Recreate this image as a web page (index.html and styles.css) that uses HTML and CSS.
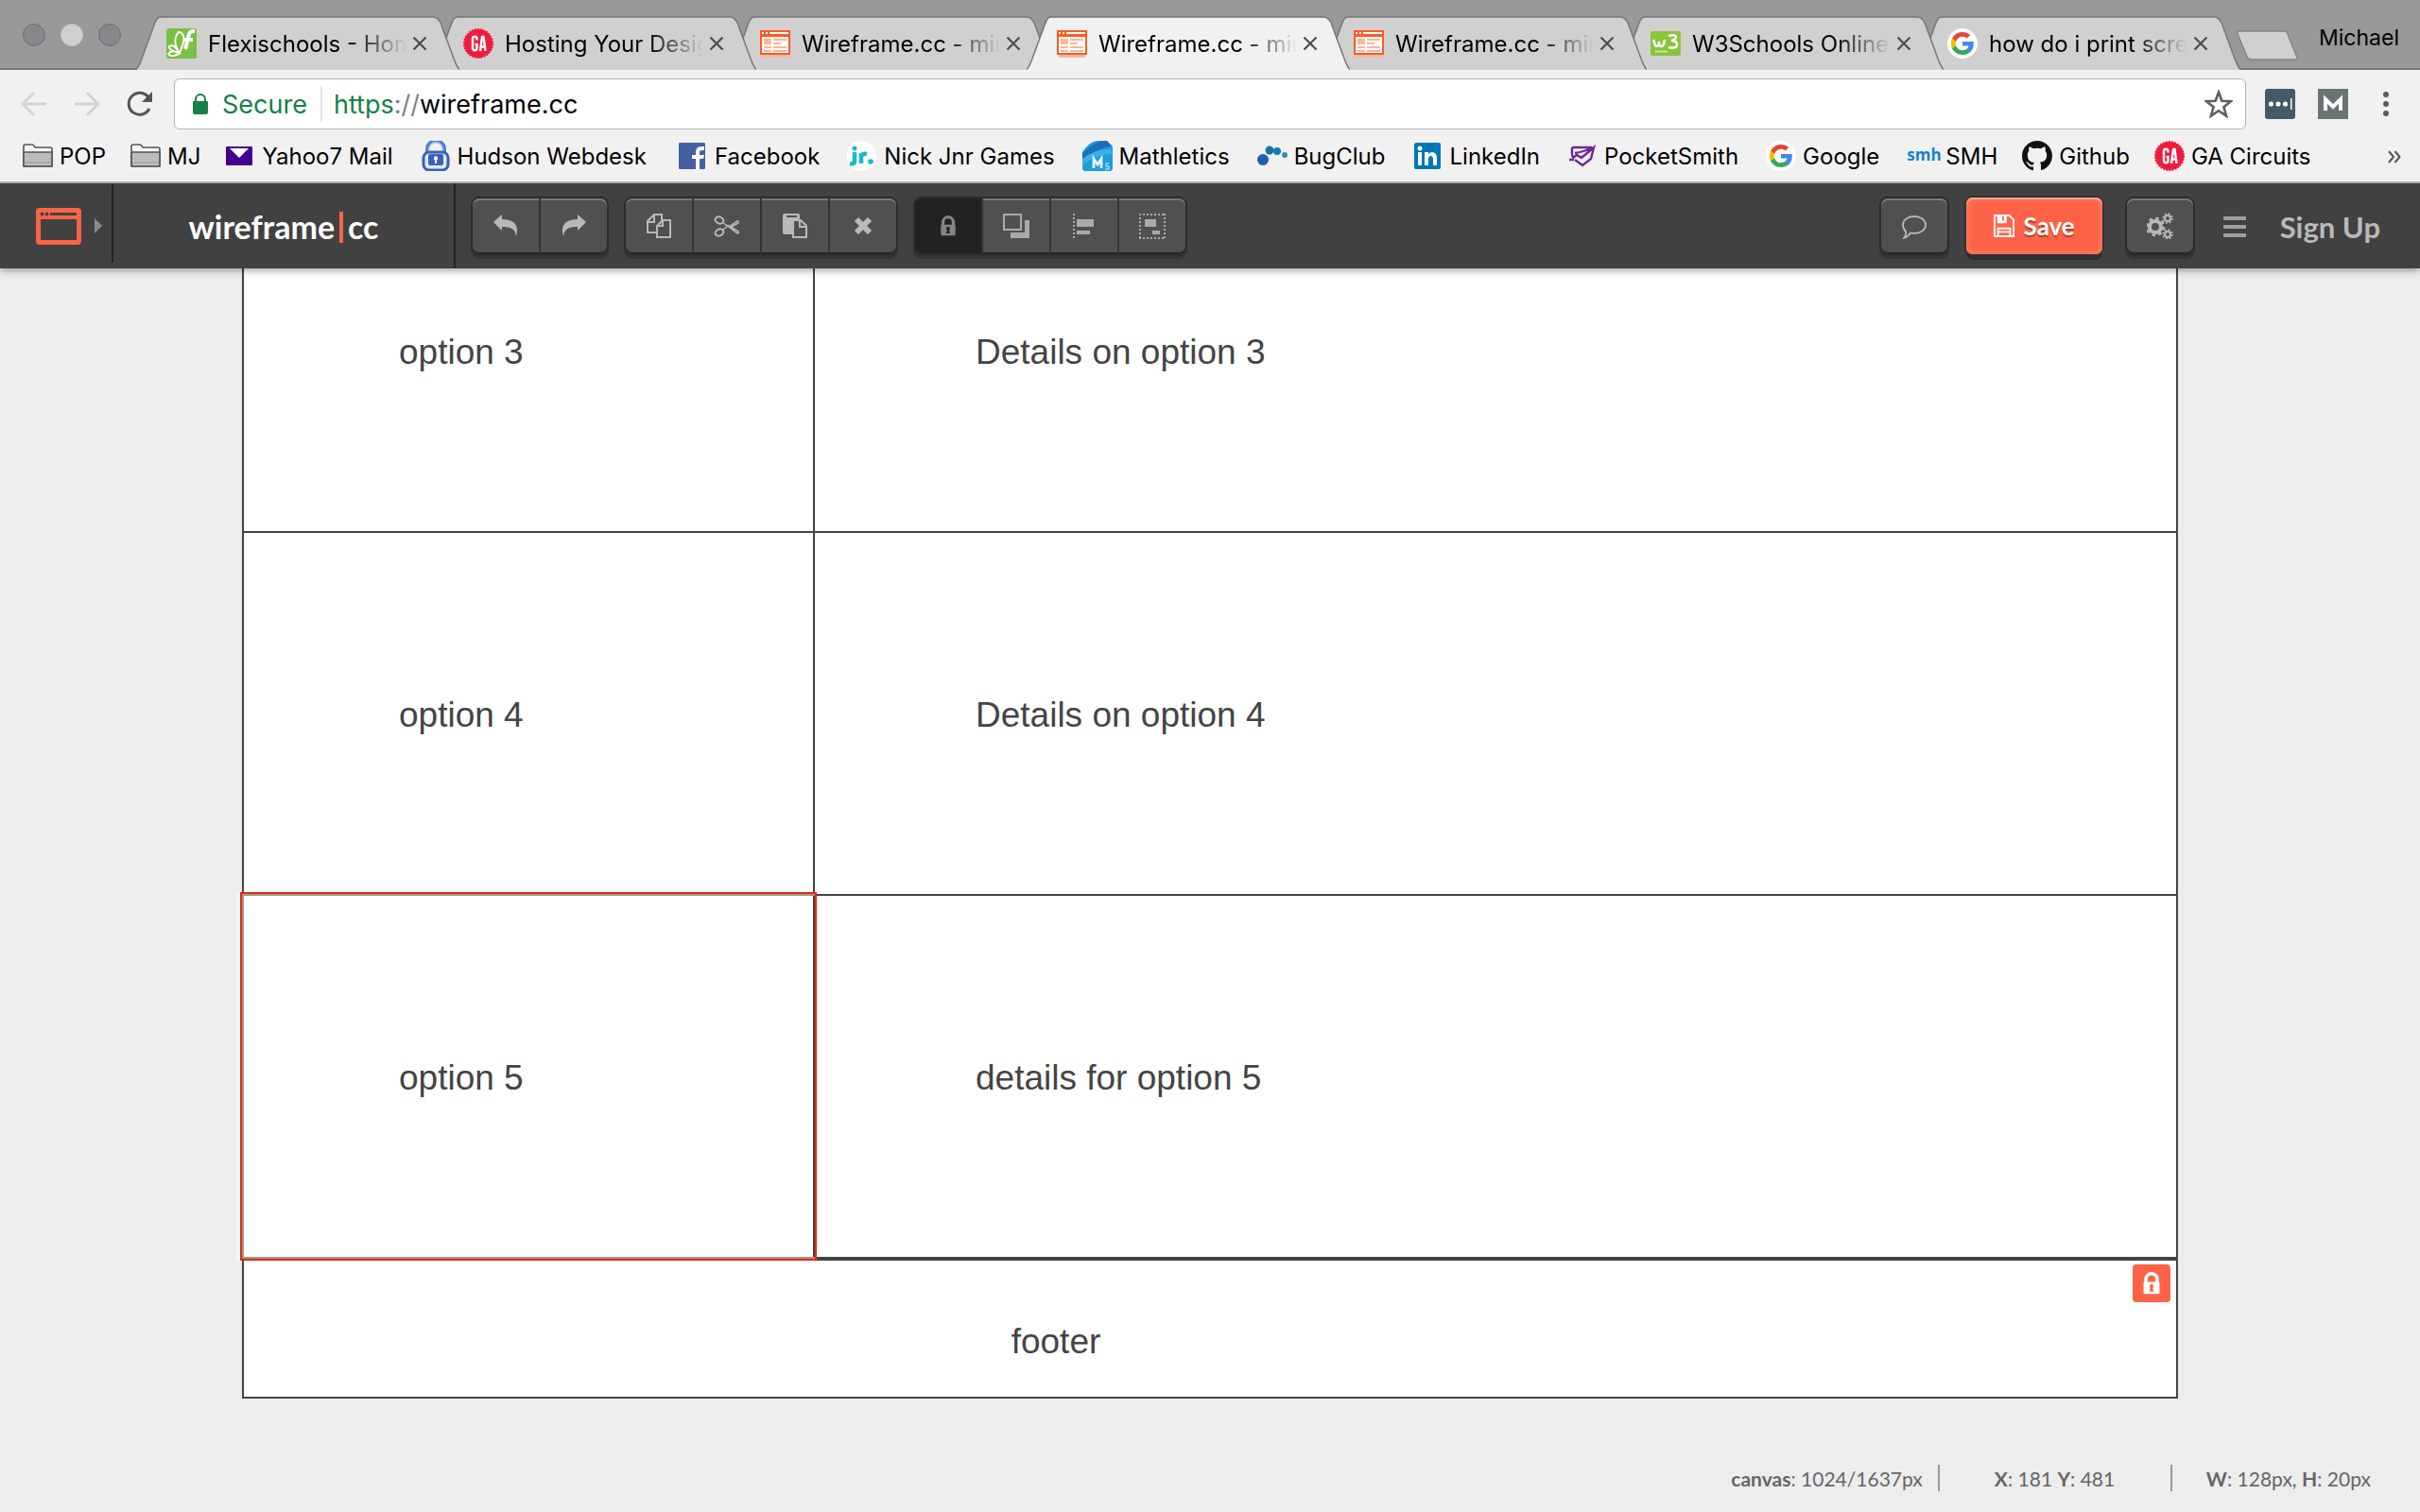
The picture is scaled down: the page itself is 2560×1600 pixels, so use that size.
FILE: index.html
```
<!DOCTYPE html>
<html lang="en">
<head>
<meta charset="utf-8">
<title>Wireframe.cc</title>
<link rel="stylesheet" href="styles.css">
</head>
<body>
<svg width="0" height="0" class="defs" aria-hidden="true">
  <defs>
    <symbol id="tab-shape" viewBox="0 0 342 57">
      <path d="M0 57C3 54 4 50 6 45L20 7C22 2 23 1 27 1H314C318 1 320 3 322 7L336 45C338 50 339 54 342 57Z" class="tab-fill"/>
      <path d="M0 56.500C3 54 4 50 6 45L20 7C22 2 23 1 27 1H314C318 1 320 3 322 7L336 45C338 50 339 54 342 56.500" fill="none" stroke="#777" stroke-width="1.500"/>
    </symbol>
    <symbol id="i-close" viewBox="0 0 16 16"><path d="M1.500 1.500l13 13M14.500 1.500l-13 13" stroke="#4d4d4d" stroke-width="2.200" fill="none"/></symbol>
    <symbol id="i-wire" viewBox="0 0 32 32">
      <path d="M2 28h28v3H2z" fill="#f4b9a4"/><path d="M0 2h32v26H0z" fill="#ff5a1f"/>
      <path d="M2 4h2v2H2zM6 4h2v2H6zM10 4h20v2H10zM2 9h28v17H2z" fill="#fff"/>
      <path d="M4 11h8v6H4zM14 11h14v2H14zM14 15h8v2h-8zM4 19h8v2H4zM14 19h14v2H14zM4 23h8v2H4zM14 23h14v2H14z" fill="#ffb596"/>
    </symbol>
    <symbol id="i-ga" viewBox="0 0 32 32">
      <circle cx="16" cy="16" r="15" fill="#ee1c3c" stroke="#ee1c3c" stroke-width="2" stroke-dasharray="2 1.140"/>
      <path d="M14.500 12.500V11c0-3-4.500-3-4.500 0v10c0 3 4.500 3 4.500 0v-4h-2M18 24l2-15h1.500l2 15M18.700 19.500h4" fill="none" stroke="#fff" stroke-width="2.400"/>
    </symbol>
    <symbol id="i-google" viewBox="0 0 32 32">
      <circle cx="16" cy="16" r="16" fill="#fff"/>
      <path d="M27.800 16.300c0-.9-.1-1.600-.2-2.300H16v4.600h6.600c-.3 1.500-1.100 2.700-2.400 3.600v3h3.900c2.300-2.100 3.700-5.200 3.700-8.900z" fill="#4285f4"/>
      <path d="M16 28c3.300 0 6-1.100 8.100-2.900l-3.900-3c-1.100.7-2.500 1.200-4.200 1.200-3.200 0-5.900-2.200-6.900-5.100H5.100v3.100C7.100 25.300 11.200 28 16 28z" fill="#34a853"/>
      <path d="M9.100 18.200c-.5-1.500-.5-3 0-4.500v-3.100H5.100c-1.600 3.300-1.600 7.300 0 10.700z" fill="#fbbc05"/>
      <path d="M16 8.700c1.800 0 3.400.6 4.700 1.800l3.500-3.500C22 5 19.300 4 16 4 11.200 4 7.100 6.700 5.100 10.600l4 3.100c1-2.900 3.700-5 6.900-5z" fill="#ea4335"/>
    </symbol>
    <symbol id="i-folder" viewBox="0 0 32 32">
      <path d="M1 27V6q0-2 2-2h7q1.500 0 2 1.500L13 7h16q2 0 2 2v18z" fill="#f4f4f4" stroke="#555" stroke-width="1.600"/>
      <path d="M1 12h30v13q0 2-2 2H3q-2 0-2-2z" fill="#bcbcbc" stroke="#555" stroke-width="1.600"/><path d="M2 23h28" stroke="#999"/>
    </symbol>
    <symbol id="i-lock" viewBox="0 0 28 34">
      <path d="M2 16q0-1 1-1V11a11 11 0 0 1 22 0v4q1 0 1 1v15q0 2-2 2H4q-2 0-2-2zM8 15h12v-4a6 6 0 0 0-12 0z" fill-rule="evenodd" fill="currentColor"/>
      <path d="M14 18.500a3 3 0 0 0-2 5.200V26l-1.500 3.500h7L16 26v-2.300a3 3 0 0 0-2-5.200z" class="keyhole"/>
    </symbol>
  </defs>
</svg>

<header class="browser">
  <div class="tabstrip">
    <div class="lights"><i></i><i class="lit"></i><i></i></div>
    <ul class="tabs">
      <li class="tab"><svg class="shape"><use href="#tab-shape"/></svg>
        <svg class="fav" viewBox="0 0 32 32"><rect width="32" height="32" rx="2" fill="#7ac043"/><g fill="none" stroke="#fff" stroke-width="1.800"><path d="M14 26C8 18 8 9 13 4c5 0 6 6 5 11-1 4-3 8-4 11zM14 26C10 19 6 17 3 19c-1 3 5 6 11 7zM14 26C9 24 4 24 2 27c2 3 8 3 12-1"/></g><path d="M20 22c2-5 2-11 4-16 1-3 3-3 6-3M19 12h9" stroke="#fff" stroke-width="4" fill="none"/></svg>
        <span class="title">Flexischools - Home</span><button class="close" aria-label="Close tab"><svg><use href="#i-close"/></svg></button></li>
      <li class="tab"><svg class="shape"><use href="#tab-shape"/></svg><svg class="fav"><use href="#i-ga"/></svg><span class="title">Hosting Your Design</span><button class="close" aria-label="Close tab"><svg><use href="#i-close"/></svg></button></li>
      <li class="tab"><svg class="shape"><use href="#tab-shape"/></svg><svg class="fav"><use href="#i-wire"/></svg><span class="title">Wireframe.cc - min</span><button class="close" aria-label="Close tab"><svg><use href="#i-close"/></svg></button></li>
      <li class="tab active"><svg class="shape"><use href="#tab-shape"/></svg><svg class="fav"><use href="#i-wire"/></svg><span class="title">Wireframe.cc - min</span><button class="close" aria-label="Close tab"><svg><use href="#i-close"/></svg></button></li>
      <li class="tab"><svg class="shape"><use href="#tab-shape"/></svg><svg class="fav"><use href="#i-wire"/></svg><span class="title">Wireframe.cc - min</span><button class="close" aria-label="Close tab"><svg><use href="#i-close"/></svg></button></li>
      <li class="tab"><svg class="shape"><use href="#tab-shape"/></svg>
        <svg class="fav" viewBox="0 0 32 32"><rect y="3" width="32" height="26" rx="2" fill="#8ac53e"/><path d="M3 12l2 6q2 2 4-1v-3 3q2 4 5 0l1-5M19 8q7-2 8 1 0 3-5 4 6 0 6 4 0 5-9 3" fill="none" stroke="#fff" stroke-width="2.500"/><path d="M5 24.500h13" stroke="#e3f1d0" stroke-width="2" stroke-dasharray="1.500 .7"/></svg>
        <span class="title">W3Schools Online</span><button class="close" aria-label="Close tab"><svg><use href="#i-close"/></svg></button></li>
      <li class="tab"><svg class="shape"><use href="#tab-shape"/></svg><svg class="fav"><use href="#i-google"/></svg><span class="title">how do i print scre</span><button class="close" aria-label="Close tab"><svg><use href="#i-close"/></svg></button></li>
    </ul>
    <button class="newtab" aria-label="New tab"><svg viewBox="0 0 66 34"><path d="M3 1H50q3 0 4 3l10 25q1 2-2 2H16q-4 0-5-3L1 4Q0 1 3 1z" fill="#d0d0d0" stroke="#858585" stroke-width="1.500"/></svg></button>
    <button class="profile">Michael</button>
  </div>

  <div class="toolbar">
    <button aria-label="Back"><svg viewBox="0 0 28 28" fill="none" stroke="#d2d2d2" stroke-width="2.800"><path d="M27 14H3M14 2L2 14l12 12"/></svg></button>
    <button aria-label="Forward"><svg viewBox="0 0 28 28" fill="none" stroke="#d2d2d2" stroke-width="2.800"><path d="M1 14h24M14 2l12 12-12 12"/></svg></button>
    <button aria-label="Reload"><svg viewBox="0 0 28 28"><path d="M24 19A11.500 11.500 0 1 1 23 7" fill="none" stroke="#555" stroke-width="3"/><path d="M27 1v11H16z" fill="#555"/></svg></button>
    <div class="omnibox">
      <svg class="secure-icon" viewBox="0 0 16 22"><path d="M2 8V6a6 6 0 0 1 12 0v2h1q1 0 1 1v11q0 2-2 2H2q-2 0-2-2V9q0-1 1-1zm2 0h8V6a4 4 0 0 0-8 0z" fill="#188046" fill-rule="evenodd"/></svg>
      <span class="secure">Secure</span>
      <div class="url" role="textbox" contenteditable="true" aria-label="Address"><span class="scheme">https</span><span class="sep">://</span>wireframe.cc</div>
      <button aria-label="Bookmark this page"><svg viewBox="0 0 30 30"><path d="M15 2.500l3.400 9.300 9.600.4-7.600 6 2.700 9.500-8.100-5.500-8.100 5.500 2.700-9.500-7.600-6 9.600-.4z" fill="none" stroke="#5f5f5f" stroke-width="2.600"/></svg></button>
    </div>
    <div class="extensions">
      <button aria-label="Password manager"><svg viewBox="0 0 32 32"><rect width="32" height="32" rx="3" fill="#455a64"/><g fill="#fff"><circle cx="6.500" cy="16" r="2.600"/><circle cx="14" cy="16" r="2.600"/><circle cx="21.500" cy="16" r="2.600"/><path d="M27 10h1.500v12H27z"/></g></svg></button>
      <button aria-label="Mail extension"><svg viewBox="0 0 32 32"><path fill="#6a7373" d="M0 0h32v32H0z"/><path d="M8 23V11l8 8 8-8v12" fill="none" stroke="#fff" stroke-width="4"/></svg></button>
      <button aria-label="Menu"><svg viewBox="0 0 32 32" fill="#5a5a5a"><circle cx="16" cy="6" r="3"/><circle cx="16" cy="16" r="3"/><circle cx="16" cy="26" r="3"/></svg></button>
    </div>
  </div>

  <nav class="bookmarks">
    <a class="tight" href="#"><svg><use href="#i-folder"/></svg>POP</a>
    <a class="tight" href="#"><svg><use href="#i-folder"/></svg>MJ</a>
    <a href="#"><svg viewBox="0 0 32 32"><rect x="1" y="6" width="28" height="20" rx="1" fill="#410093"/><path d="M5 8h20L15 18z" fill="#fff"/></svg>Yahoo7 Mail</a>
    <a class="loose" href="#"><svg viewBox="0 0 32 32"><path d="M7 14V9a9 9 0 0 1 18 0v5" fill="none" stroke="#4a7fc8" stroke-width="4"/><path d="M8.500 14V9a7.500 7.500 0 0 1 15 0v5" fill="none" stroke="#9dbfea" stroke-width="1.500"/><rect x="3" y="12" width="26" height="19" rx="6" fill="#dfe8f8" stroke="#3d5fae" stroke-width="3"/><rect x="8" y="14" width="16" height="12" rx="2" fill="#3c62b8"/><path d="M16 16a2.500 2.500 0 0 0-1 4.500V24h2v-3.500A2.500 2.500 0 0 0 16 16z" fill="#fff"/></svg>Hudson Webdesk</a>
    <a href="#"><svg viewBox="0 0 32 32"><rect x="1" y="2" width="28" height="28" rx="1" fill="#4460a0"/><path d="M19 30V19h-4v-4h4v-3q0-6 6-6h3v4h-2q-3 0-3 2v3h5l-1 4h-4v11z" fill="#fff"/></svg>Facebook</a>
    <a href="#"><svg viewBox="0 0 32 32"><circle cx="15" cy="16" r="16" fill="#fff"/><path d="M8 12v10q0 3-5 2M15 24V13M15 16q2-3 6-2" fill="none" stroke="#1bb8cf" stroke-width="4.500"/><circle cx="8" cy="8" r="2.500" fill="#1bb8cf"/><circle cx="25" cy="22" r="2.800" fill="#1bb8cf"/></svg>Nick Jnr Games</a>
    <a href="#"><svg viewBox="0 0 32 32"><path d="M0 12Q8 0 16 0h10l6 6v24l-2 2H2l-2-2z" fill="#1f9ddb"/><path d="M6 8q10-9 20-8l5 6Q18 7 0 20v-7z" fill="#1c6fb5"/><path d="M0 19Q14 8 31 9v5Q14 14 0 26z" fill="#3bb0e4"/><path d="M12 29V19l4 6 4-6v10" fill="none" stroke="#e6f6fd" stroke-width="2.800"/><path d="M28 24h-3v3h3v3h-4" fill="none" stroke="#9bd7f3" stroke-width="1.500"/></svg>Mathletics</a>
    <a href="#"><svg viewBox="0 0 32 32"><circle cx="6" cy="20" r="6" fill="#1f5fa8"/><circle cx="13" cy="10" r="4.500" fill="#1273a8"/><circle cx="21" cy="11" r="4" fill="#0f80ac"/><circle cx="29" cy="15" r="3" fill="#2a96b4"/></svg>BugClub</a>
    <a href="#"><svg viewBox="0 0 32 32"><rect x="1" y="2" width="28" height="28" rx="2" fill="#0077b5"/><circle cx="7" cy="8" r="2.500" fill="#fff"/><path d="M5 12h4v14H5zM12 12h4v2c3-4 9-2 9 4v8h-4v-7c0-4-5-4-5 0v7h-4z" fill="#fff"/></svg>LinkedIn</a>
    <a href="#"><svg viewBox="0 0 32 32"><path d="M5 7h21M5 7v7q0 3 2 5M8 13q8-1 20-6M6 18l4-3 5 3L28 7 25 19l-9 7-8-6M2 20h5" fill="none" stroke="#6b2c91" stroke-width="2.400"/></svg>PocketSmith</a>
    <a href="#"><svg><use href="#i-google"/></svg>Google</a>
    <a class="tight" href="#"><span class="smh">smh</span>SMH</a>
    <a class="tight" href="#"><svg viewBox="0 0 16 16"><path fill="#111" d="M8 0C3.600 0 0 3.600 0 8c0 3.500 2.300 6.500 5.500 7.600.4.100.5-.2.500-.4v-1.500c-2 .4-2.500-.5-2.700-.9-.1-.3-.5-1-.8-1.200-.3-.1-.7-.5 0-.5.600 0 1.100.6 1.200.8.700 1.200 1.900.9 2.300.7.100-.5.300-.9.500-1.100-1.800-.2-3.600-.9-3.600-4 0-.9.300-1.600.8-2.100-.1-.2-.4-1 .1-2.100 0 0 .7-.2 2.200.8a7.400 7.400 0 0 1 4 0c1.500-1 2.200-.8 2.200-.8.400 1.100.2 1.900.1 2.100.5.600.8 1.300.8 2.100 0 3.100-1.900 3.700-3.700 3.900.3.300.6.800.6 1.500v2.200c0 .2.100.5.500.4A8 8 0 0 0 16 8c0-4.400-3.600-8-8-8z"/></svg>Github</a>
    <a href="#"><svg><use href="#i-ga"/></svg>GA Circuits</a>
    <button class="more" aria-label="More bookmarks"><svg viewBox="0 0 14 14"><path d="M1 1l5 6-5 6M7.500 1l5 6-5 6" fill="none" stroke="#555" stroke-width="2"/></svg></button>
  </nav>
</header>

<div class="appbar">
  <button class="device" aria-label="Choose device">
    <svg class="window" viewBox="0 0 48 39"><path d="M4 0h40q4 0 4 4v31q0 4-4 4H4q-4 0-4-4V4q0-4 4-4zM5 12v22h38V12z" fill="#ff6347" fill-rule="evenodd"/><path d="M15 5h28v3H15z" fill="#414141"/><circle cx="6.500" cy="6.500" r="1.900" fill="#414141"/><circle cx="11.500" cy="6.500" r="1.900" fill="#414141"/></svg>
    <svg class="caret" viewBox="0 0 8 16"><path d="M0 0l8 8-8 8z" fill="#8a8a8a"/></svg>
  </button>
  <a class="brand" href="#">wireframe<i></i>cc</a>
  <div class="group">
    <button aria-label="Undo"><svg viewBox="0 0 28 28"><path d="M1 10L10 2v5c11 0 19 5 15 18-1-8-6-10-15-10v4z" fill="currentColor"/></svg></button>
    <button aria-label="Redo"><svg viewBox="0 0 28 28"><path d="M27 10L18 2v5C7 7-1 12 3 25c1-8 6-10 15-10v4z" fill="currentColor"/></svg></button>
  </div>
  <div class="group">
    <button aria-label="Copy"><svg viewBox="0 0 28 28" fill="none" stroke="currentColor" stroke-width="2"><path d="M11 21H2V9l7-7h8v6M2 10h7V2M12 26V14l6-6h8v18zM12 14h6V8"/></svg></button>
    <button aria-label="Cut"><svg viewBox="0 0 28 28" fill="none" stroke="currentColor" stroke-width="2"><ellipse cx="6" cy="8" rx="4.500" ry="3.500" transform="rotate(25 6 8)"/><ellipse cx="6" cy="21" rx="4.500" ry="3.500" transform="rotate(-25 6 21)"/><path d="M10 11l6 4 9-6q2 0 1 2l-9 5M10 18l6-5M16 15l9 7q2 0 1-2l-8-5" stroke-width="1.500"/></svg></button>
    <button aria-label="Paste"><svg viewBox="0 0 28 28"><path d="M1 3q0-2 2-2h14q2 0 2 2v4q-8 4-8 10v6H3q-2 0-2-2zM5 3v2h11V3z" fill="currentColor" fill-rule="evenodd"/><path d="M12 8h8l6 6v12H12zM19 8v7h7" fill="#505050" stroke="currentColor" stroke-width="2"/></svg></button>
    <button aria-label="Delete"><svg viewBox="0 0 28 28"><path d="M7 7l14 14M21 7L7 21" stroke="currentColor" stroke-width="6"/></svg></button>
  </div>
  <div class="group">
    <button class="on" aria-label="Lock"><svg><use href="#i-lock"/></svg></button>
    <button aria-label="Bring forward"><svg viewBox="0 0 28 28"><path d="M23 8h5v19H8v-6h15z" fill="#aaa"/><path d="M1 2h18v16H1z" fill="#505050" stroke="#aaa" stroke-width="2"/></svg></button>
    <button aria-label="Align"><svg viewBox="0 0 28 28" fill="#aaa"><path d="M6 7h18v8H6zM6 19h14v4H6z"/><path d="M3 1v28" stroke="#aaa" stroke-width="2" stroke-dasharray="2 2"/></svg></button>
    <button aria-label="Group"><svg viewBox="0 0 28 28" fill="#aaa"><path d="M6 7h12v8H6zM14 19h8v4h-8z"/><path d="M0 2h28M0 27h28M1 1v27M27 1v27" stroke="#aaa" stroke-width="2" stroke-dasharray="2 2"/></svg></button>
  </div>
  <div class="right">
    <div class="group"><button aria-label="Comments"><svg viewBox="0 0 28 28"><path d="M14 4c7 0 12 4 12 9s-5 9-12 9q-2 0-4-.5Q7 26 3 27q3-4 2-7-3-3-3-7c0-5 5-9 12-9z" fill="none" stroke="currentColor" stroke-width="1.800"/></svg></button></div>
    <button class="save"><svg viewBox="0 0 24 28" fill="none" stroke="#fff" stroke-width="2"><path d="M1 2h17l5 5v19H1z"/><path d="M5 26v-9h14v9M5 21h14"/><path d="M5 2h9v8H5z" fill="#fff"/><path d="M11 3v5" stroke="#ff6347"/></svg>Save</button>
    <div class="group"><button aria-label="Settings"><svg viewBox="0 0 28 28" fill="none" stroke="currentColor"><circle cx="9" cy="15" r="6" stroke-width="4"/><circle cx="9" cy="15" r="9" stroke-width="2.500" stroke-dasharray="3.500 3.570"/><circle cx="22" cy="6" r="3" stroke-width="2"/><circle cx="22" cy="6" r="5" stroke-width="1.500" stroke-dasharray="2 1.920"/><circle cx="22" cy="23" r="3" stroke-width="2"/><circle cx="22" cy="23" r="5" stroke-width="1.500" stroke-dasharray="2 1.920"/></svg></button></div>
    <button class="burger" aria-label="Menu"><svg viewBox="0 0 24 24"><path d="M0 2h24v4H0zM0 11h24v4H0zM0 20h24v4H0z" fill="#a0a0a0"/></svg></button>
    <a class="signup" href="#">Sign Up</a>
  </div>
</div>

<main class="stage">
  <div class="sheet">
    <div class="row"><div class="cell">option 3</div><div class="cell wide">Details on option 3</div></div>
    <div class="row"><div class="cell">option 4</div><div class="cell wide">Details on option 4</div></div>
    <div class="row"><div class="cell selected">option 5</div><div class="cell wide">details for option 5</div></div>
    <div class="foot">footer<span class="badge"><svg><use href="#i-lock"/></svg></span></div>
  </div>
  <div class="status">
    <span class="canvas-size"><b>canvas</b>: 1024/1637px</span>
    <span class="pointer"><b>X</b>: 181 <b>Y</b>: 481</span>
    <span class="size"><b>W</b>: 128px, <b>H</b>: 20px</span>
  </div>
</main>
</body>
</html>
```
FILE: styles.css
```
* { box-sizing: border-box; }
html, body { height: 100%; }
body {
  margin: 0;
  display: flex;
  flex-direction: column;
  overflow: hidden;
  background: #ededed;
  font-family: Inter, "Liberation Sans", sans-serif;
  font-size: 24px;
  color: #000;
}
button { padding: 0; border: 0; background: none; font: inherit; color: inherit; }
a { color: inherit; text-decoration: none; }
svg { display: block; flex: none; }
.defs { position: absolute; }

/* Browser window */
.browser { position: relative; z-index: 6; flex: none; background: #f1f1f1; border-bottom: 2px solid #b0b0b0; }
.tabstrip {
  display: flex;
  align-items: flex-end;
  height: 74px;
  padding-right: 22px;
  background: #999;
  box-shadow: inset 0 -2px #777;
}
.lights { display: flex; gap: 16px; align-self: center; width: 144px; padding-left: 24px; }
.lights i { width: 24px; height: 24px; border-radius: 50%; background: #88868b; border: 1px solid #706e74; }
.lights .lit { background: #d0d0d0; border-color: #c4c4c4; }
.tabs { display: flex; margin: 0; padding: 0; list-style: none; }
.tab {
  position: relative;
  display: flex;
  align-items: center;
  width: 342px;
  height: 57px;
  padding-left: 32px;
}
.tab + .tab { margin-left: -28px; }
.tab:nth-child(1) { z-index: 3; }
.tab:nth-child(2) { z-index: 2; }
.tab:nth-child(3) { z-index: 1; }
.tab:nth-child(5) { z-index: 3; }
.tab:nth-child(6) { z-index: 2; }
.tab:nth-child(7) { z-index: 1; }
.tab.active { z-index: 4; }
.shape { position: absolute; inset: 0; width: 100%; height: 100%; fill: #d0d0d0; }
.active .shape { fill: #f1f1f1; }
.fav { position: relative; width: 32px; height: 32px; }
.title {
  position: relative;
  width: 210px;
  margin-left: 12px;
  padding-top: 2px;
  overflow: hidden;
  white-space: nowrap;
  line-height: 32px;
  -webkit-mask-image: linear-gradient(to right, #000 72%, transparent);
  mask-image: linear-gradient(to right, #000 72%, transparent);
}
.close { position: relative; margin-left: 6px; }
.close svg { width: 16px; height: 16px; }
.newtab { margin: 0 auto 8px -4px; }
.newtab svg { width: 66px; height: 34px; }
.profile { align-self: center; padding-top: 6px; font-size: 23px; line-height: 24px; }

.toolbar { display: flex; align-items: center; gap: 28px; height: 72px; padding: 0 20px 0 22px; }
.toolbar > button svg { width: 28px; height: 28px; }
.omnibox {
  flex: 1;
  display: flex;
  align-items: center;
  height: 54px;
  margin-left: -6px;
  padding: 0 13px 0 19px;
  background: #fff;
  border: 1px solid #b4b4b4;
  border-radius: 6px;
  font-size: 27px;
  line-height: 32px;
}
.secure-icon { width: 16px; height: 22px; }
.secure { margin: 0 14px 0 15px; padding-top: 2px; color: #188046; }
.url { flex: 1; padding: 2px 0 0 12px; border-left: 2px solid #e4e4e4; line-height: 36px; outline: 0; }
.scheme { color: #188046; }
.sep { color: #808080; }
.omnibox button svg { width: 30px; height: 30px; }
.extensions { display: flex; gap: 24px; margin-left: -8px; }
.extensions svg { width: 32px; height: 32px; }

.bookmarks { display: flex; align-items: center; gap: 29px; height: 46px; padding: 0 20px 6px 24px; line-height: 34px; }
.bookmarks a { display: flex; gap: 7px; white-space: nowrap; }
.bookmarks .tight { margin-right: -3px; }
.bookmarks .loose { margin-right: 4px; }
.bookmarks svg { width: 32px; height: 32px; }
.smh { font-family: "Open Sans", sans-serif; font-weight: 700; font-size: 17px; color: #1184ce; width: 34px; line-height: 30px; }
.more { margin-left: auto; }
.bookmarks .more svg { width: 14px; height: 14px; }

/* Editor bar */
.appbar {
  position: relative;
  z-index: 5;
  flex: none;
  display: flex;
  align-items: center;
  height: 90px;
  padding-right: 42px;
  background: #414141;
  box-shadow: 0 2px 8px rgba(0, 0, 0, .4);
  font-family: Lato, sans-serif;
  color: #b9b9b9;
}
.device {
  align-self: flex-start;
  display: flex;
  align-items: center;
  gap: 14px;
  width: 120px;
  height: 84px;
  padding: 6px 0 0 38px;
  border-right: 2px solid #222;
}
.window { width: 48px; height: 39px; }
.caret { width: 8px; height: 16px; }
.brand {
  display: flex;
  align-items: center;
  justify-content: center;
  width: 362px;
  height: 90px;
  padding-top: 2px;
  border-right: 2px solid #222;
  font-size: 34px;
  font-weight: 700;
  line-height: 40px;
  color: #fff;
}
.brand i { width: 4px; height: 33px; margin: 0 5px; background: #ff6347; }
.group {
  display: flex;
  gap: 2px;
  margin-left: 16px;
  border: 2px solid #2c2c2c;
  border-radius: 9px;
  background: #333;
  box-shadow: 0 4px #333;
}
.group button {
  display: grid;
  place-items: center;
  width: 70px;
  height: 58px;
  background: #505050;
  box-shadow: inset 0 2px #777, inset 0 -1px #202020;
}
.group button:first-child { border-radius: 7px 0 0 7px; }
.group button:last-child { border-radius: 0 7px 7px 0; }
.group button:only-child { border-radius: 7px; }
.group svg { width: 28px; height: 28px; }
.group .on { background: #222; box-shadow: none; color: #848484; }
.group .on svg { width: 18px; height: 22px; }
.keyhole { fill: var(--hole); }
.on { --hole: #222; }
.right { display: flex; align-items: center; margin-left: auto; }
.right .group { margin-left: 0; }
.save {
  display: flex;
  align-items: center;
  justify-content: center;
  gap: 10px;
  width: 144px;
  height: 60px;
  margin: 0 24px 0 18px;
  border-radius: 7px;
  background: #ff6347;
  box-shadow: inset 0 2px #ffa593, inset 0 0 8px #ff8a74, 0 0 0 2px #333, 0 6px #2e2e2e;
  font-size: 26px;
  font-weight: 700;
  color: #fff;
  text-shadow: 0 2px 1px rgba(0, 0, 0, .35);
}
.save svg { width: 22px; height: 26px; }
.burger { margin: 0 36px 0 30px; }
.burger svg { width: 24px; height: 24px; }
.signup { padding-top: 2px; font-size: 31px; font-weight: 700; line-height: 40px; }

/* Wireframe */
.stage { flex: 1; display: flex; flex-direction: column; min-height: 0; }
.sheet {
  width: 80%;
  margin: -104px auto 0;
  border: 2px solid #444;
  border-top: 0;
  background: #fff;
  font: 37px/44px "Liberation Sans", Arial, sans-serif;
  color: #444;
}
.row { display: grid; grid-template-columns: 604px 1fr; height: 384px; }
.cell {
  position: relative;
  display: flex;
  align-items: center;
  padding: 4px 0 0 164px;
  border-right: 2px solid #444;
  border-bottom: 2px solid #444;
}
.wide { padding-left: 170px; border-right: 0; }
.selected { z-index: 1; }
.selected::after {
  content: "";
  position: absolute;
  inset: -4px;
  border: 2px solid #ea2906;
  box-shadow: -4px 0 rgba(255, 255, 255, .5), inset 2px 2px #999, inset 0 -2px #999;
}
.foot {
  position: relative;
  display: flex;
  align-items: center;
  justify-content: center;
  height: 146px;
  padding: 28px 326px 0 0;
  border-top: 2px solid #444;
}
.badge {
  position: absolute;
  top: 4px;
  right: 6px;
  display: grid;
  place-items: center;
  width: 40px;
  height: 40px;
  border-radius: 4px;
  background: #ff6347;
  color: #fff;
  --hole: #ff6347;
}
.badge svg { width: 20px; height: 24px; }

.status {
  display: flex;
  justify-content: flex-end;
  margin: auto 0 22px;
  padding-right: 52px;
  font: 21px/26px Lato, sans-serif;
  color: #666;
}
.status span { padding-top: 2px; }
.status .canvas-size { padding-right: 16px; border-right: 2px solid #999; }
.status .pointer { width: 246px; padding-left: 58px; border-right: 2px solid #999; }
.status .size { padding-left: 36px; }
```
